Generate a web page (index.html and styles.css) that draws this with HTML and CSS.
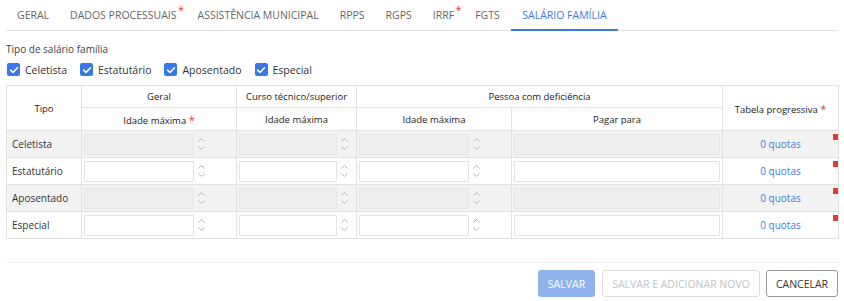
FILE: index.html
```html
<!DOCTYPE html>
<html>
<head>
<meta charset="utf-8">
<link rel="stylesheet" href="styles.css">
</head>
<body>
<div class="page">
  <nav class="tabs">
    <span class="tab">GERAL</span>
    <span class="tab">DADOS PROCESSUAIS<sup class="req">*</sup></span>
    <span class="tab">ASSISTÊNCIA MUNICIPAL</span>
    <span class="tab">RPPS</span>
    <span class="tab">RGPS</span>
    <span class="tab">IRRF<sup class="req">*</sup></span>
    <span class="tab">FGTS</span>
    <span class="tab active">SALÁRIO FAMÍLIA</span>
  </nav>

  <div class="section-title">Tipo de salário família</div>
  <div class="checks">
    <label class="check"><span class="box"><svg viewBox="0 0 12 12" width="12" height="12"><path d="M2.6 6.2 L5 8.5 L9.5 3.8" fill="none" stroke="#fff" stroke-width="1.6" stroke-linecap="round" stroke-linejoin="round"/></svg></span>Celetista</label>
    <label class="check"><span class="box"><svg viewBox="0 0 12 12" width="12" height="12"><path d="M2.6 6.2 L5 8.5 L9.5 3.8" fill="none" stroke="#fff" stroke-width="1.6" stroke-linecap="round" stroke-linejoin="round"/></svg></span>Estatutário</label>
    <label class="check"><span class="box"><svg viewBox="0 0 12 12" width="12" height="12"><path d="M2.6 6.2 L5 8.5 L9.5 3.8" fill="none" stroke="#fff" stroke-width="1.6" stroke-linecap="round" stroke-linejoin="round"/></svg></span>Aposentado</label>
    <label class="check"><span class="box"><svg viewBox="0 0 12 12" width="12" height="12"><path d="M2.6 6.2 L5 8.5 L9.5 3.8" fill="none" stroke="#fff" stroke-width="1.6" stroke-linecap="round" stroke-linejoin="round"/></svg></span>Especial</label>
  </div>

  <table class="grid">
    <colgroup>
      <col class="c-tipo"><col class="c-geral"><col class="c-curso"><col class="c-pidade"><col class="c-pagar"><col class="c-tab">
    </colgroup>
    <thead>
      <tr class="h1">
        <th rowspan="2">Tipo</th>
        <th>Geral</th>
        <th>Curso técnico/superior</th>
        <th colspan="2">Pessoa com deficiência</th>
        <th rowspan="2">Tabela progressiva <span class="req">*</span></th>
      </tr>
      <tr class="h2">
        <th>Idade máxima <span class="req">*</span></th>
        <th>Idade máxima</th>
        <th>Idade máxima</th>
        <th>Pagar para</th>
      </tr>
    </thead>
    <tbody>
      <tr class="off">
        <td class="tipo">Celetista</td>
        <td><div class="num"><span class="inp w109"></span><span class="spin"><svg width="9" height="16" viewBox="0 0 9 16"><path d="M1.5 5.5 L4.5 2.5 L7.5 5.5 M1.5 10.5 L4.5 13.5 L7.5 10.5" fill="none" stroke="#b5b5b5" stroke-width="1"/></svg></span></div></td>
        <td><div class="num"><span class="inp w98"></span><span class="spin"><svg width="9" height="16" viewBox="0 0 9 16"><path d="M1.5 5.5 L4.5 2.5 L7.5 5.5 M1.5 10.5 L4.5 13.5 L7.5 10.5" fill="none" stroke="#b5b5b5" stroke-width="1"/></svg></span></div></td>
        <td><div class="num"><span class="inp w109"></span><span class="spin"><svg width="9" height="16" viewBox="0 0 9 16"><path d="M1.5 5.5 L4.5 2.5 L7.5 5.5 M1.5 10.5 L4.5 13.5 L7.5 10.5" fill="none" stroke="#b5b5b5" stroke-width="1"/></svg></span></div></td>
        <td><span class="inp full"></span></td>
        <td class="quota"><a>0 quotas</a><span class="flag"></span></td>
      </tr>
      <tr>
        <td class="tipo">Estatutário</td>
        <td><div class="num"><span class="inp w109"></span><span class="spin"><svg width="9" height="16" viewBox="0 0 9 16"><path d="M1.5 5.5 L4.5 2.5 L7.5 5.5 M1.5 10.5 L4.5 13.5 L7.5 10.5" fill="none" stroke="#b5b5b5" stroke-width="1"/></svg></span></div></td>
        <td><div class="num"><span class="inp w98"></span><span class="spin"><svg width="9" height="16" viewBox="0 0 9 16"><path d="M1.5 5.5 L4.5 2.5 L7.5 5.5 M1.5 10.5 L4.5 13.5 L7.5 10.5" fill="none" stroke="#b5b5b5" stroke-width="1"/></svg></span></div></td>
        <td><div class="num"><span class="inp w109"></span><span class="spin"><svg width="9" height="16" viewBox="0 0 9 16"><path d="M1.5 5.5 L4.5 2.5 L7.5 5.5 M1.5 10.5 L4.5 13.5 L7.5 10.5" fill="none" stroke="#b5b5b5" stroke-width="1"/></svg></span></div></td>
        <td><span class="inp full"></span></td>
        <td class="quota"><a>0 quotas</a><span class="flag"></span></td>
      </tr>
      <tr class="off">
        <td class="tipo">Aposentado</td>
        <td><div class="num"><span class="inp w109"></span><span class="spin"><svg width="9" height="16" viewBox="0 0 9 16"><path d="M1.5 5.5 L4.5 2.5 L7.5 5.5 M1.5 10.5 L4.5 13.5 L7.5 10.5" fill="none" stroke="#b5b5b5" stroke-width="1"/></svg></span></div></td>
        <td><div class="num"><span class="inp w98"></span><span class="spin"><svg width="9" height="16" viewBox="0 0 9 16"><path d="M1.5 5.5 L4.5 2.5 L7.5 5.5 M1.5 10.5 L4.5 13.5 L7.5 10.5" fill="none" stroke="#b5b5b5" stroke-width="1"/></svg></span></div></td>
        <td><div class="num"><span class="inp w109"></span><span class="spin"><svg width="9" height="16" viewBox="0 0 9 16"><path d="M1.5 5.5 L4.5 2.5 L7.5 5.5 M1.5 10.5 L4.5 13.5 L7.5 10.5" fill="none" stroke="#b5b5b5" stroke-width="1"/></svg></span></div></td>
        <td><span class="inp full"></span></td>
        <td class="quota"><a>0 quotas</a><span class="flag"></span></td>
      </tr>
      <tr>
        <td class="tipo">Especial</td>
        <td><div class="num"><span class="inp w109"></span><span class="spin"><svg width="9" height="16" viewBox="0 0 9 16"><path d="M1.5 5.5 L4.5 2.5 L7.5 5.5 M1.5 10.5 L4.5 13.5 L7.5 10.5" fill="none" stroke="#b5b5b5" stroke-width="1"/></svg></span></div></td>
        <td><div class="num"><span class="inp w98"></span><span class="spin"><svg width="9" height="16" viewBox="0 0 9 16"><path d="M1.5 5.5 L4.5 2.5 L7.5 5.5 M1.5 10.5 L4.5 13.5 L7.5 10.5" fill="none" stroke="#b5b5b5" stroke-width="1"/></svg></span></div></td>
        <td><div class="num"><span class="inp w109"></span><span class="spin"><svg width="9" height="16" viewBox="0 0 9 16"><path d="M1.5 5.5 L4.5 2.5 L7.5 5.5 M1.5 10.5 L4.5 13.5 L7.5 10.5" fill="none" stroke="#b5b5b5" stroke-width="1"/></svg></span></div></td>
        <td><span class="inp full"></span></td>
        <td class="quota"><a>0 quotas</a><span class="flag"></span></td>
      </tr>
    </tbody>
  </table>

  <div class="footer">
    <button class="btn primary">SALVAR</button>
    <button class="btn disabled">SALVAR E ADICIONAR NOVO</button>
    <button class="btn cancel">CANCELAR</button>
  </div>
</div>
</body>
</html>
```

FILE: styles.css
```css
* { box-sizing: border-box; }
html, body { margin: 0; padding: 0; background: #fff; }
body { font-family: "Open Sans", "Noto Sans", sans-serif; color: #333; }
.page { padding: 0 6px; }

.tabs {
  display: flex;
  height: 31px;
  border-bottom: 1px solid #e3e3e3;
}
.tab {
  position: relative;
  padding: 0 10.5px;
  font-size: 10.5px;
  line-height: 30px;
  color: #666;
  white-space: nowrap;
  border-bottom: 2px solid transparent;
  margin-bottom: -1px;
}
.tab:first-child { padding-left: 11px; }
.tab.active { color: #3b7ddd; border-bottom-color: #3b7ddd; padding: 0 11px; margin-left: 1px; }
.tab .req { position: absolute; top: -5px; right: 3px; }
.req { color: #e53935; font-size: 11px; }

.section-title {
  font-size: 10px;
  color: #444;
  margin-top: 11px;
  line-height: 14px;
}
.checks {
  display: flex;
  gap: 13px;
  margin-top: 5px;
  height: 17px;
  align-items: center;
  padding-left: 1px;
}
.check {
  display: flex;
  align-items: center;
  font-size: 10.5px;
  color: #333;
}
.box {
  width: 13px; height: 13px;
  border-radius: 2px;
  background: #3b78e7;
  display: inline-flex;
  align-items: center;
  justify-content: center;
  margin-right: 5px;
}

.grid {
  margin-top: 7px;
  width: 832px;
  border-collapse: collapse;
  table-layout: fixed;
  font-size: 10px;
}
.c-tipo { width: 75px; }
.c-geral { width: 155px; }
.c-curso { width: 120px; }
.c-pidade { width: 155px; }
.c-pagar { width: 211px; }
.c-tab { width: 116px; }
.grid th, .grid td { border: 1px solid #e2e2e2; padding: 0; }
.grid th {
  font-weight: normal;
  font-size: 9.5px;
  color: #222;
  text-align: center;
}
.grid tr.h1 th { height: 22px; }
.grid tr.h2 th { height: 23px; }
.grid th .req { font-size: 11px; }
.grid td { height: 27px; padding: 0 2px; vertical-align: middle; }
.grid td.tipo { padding-left: 5px; color: #333; }
.grid tr.off td { background: #f3f3f3; }

.num { display: flex; align-items: center; }
.inp {
  display: block;
  height: 21px;
  border: 1px solid #e3e3e3;
  background: #fff;
  border-radius: 1px;
}
.off .inp { background: #efefef; border-color: #e6e6e6; }
.w109 { width: 110px; }
.w98 { width: 98px; }
.full { width: 100%; }
.spin { display: flex; margin-left: 3px; }

.quota { position: relative; text-align: center; }
.quota a { color: #3b7ddd; font-size: 10px; }
.flag {
  position: absolute;
  top: 3px; right: 0;
  width: 5px; height: 6px;
  background: #e53935;
}

.footer {
  margin-top: 23px;
  border-top: 1px solid #efefef;
  padding-top: 7px;
  display: flex;
  justify-content: flex-end;
  gap: 6px;
}
.btn {
  font-family: "Open Sans", sans-serif;
  font-size: 10.5px;
  height: 27px;
  border-radius: 3px;
  padding: 0;
  white-space: nowrap;
  background: #fff;
}
.btn.primary { background: #8fb3ec; color: #fff; border: 1px solid #8fb3ec; width: 57px; margin-right: 1px; }
.btn.disabled { border: 1px solid #dcdcdc; color: #c4c4c4; width: 158px; }
.btn.cancel { border: 1px solid #999; color: #333; width: 72px; }
```
